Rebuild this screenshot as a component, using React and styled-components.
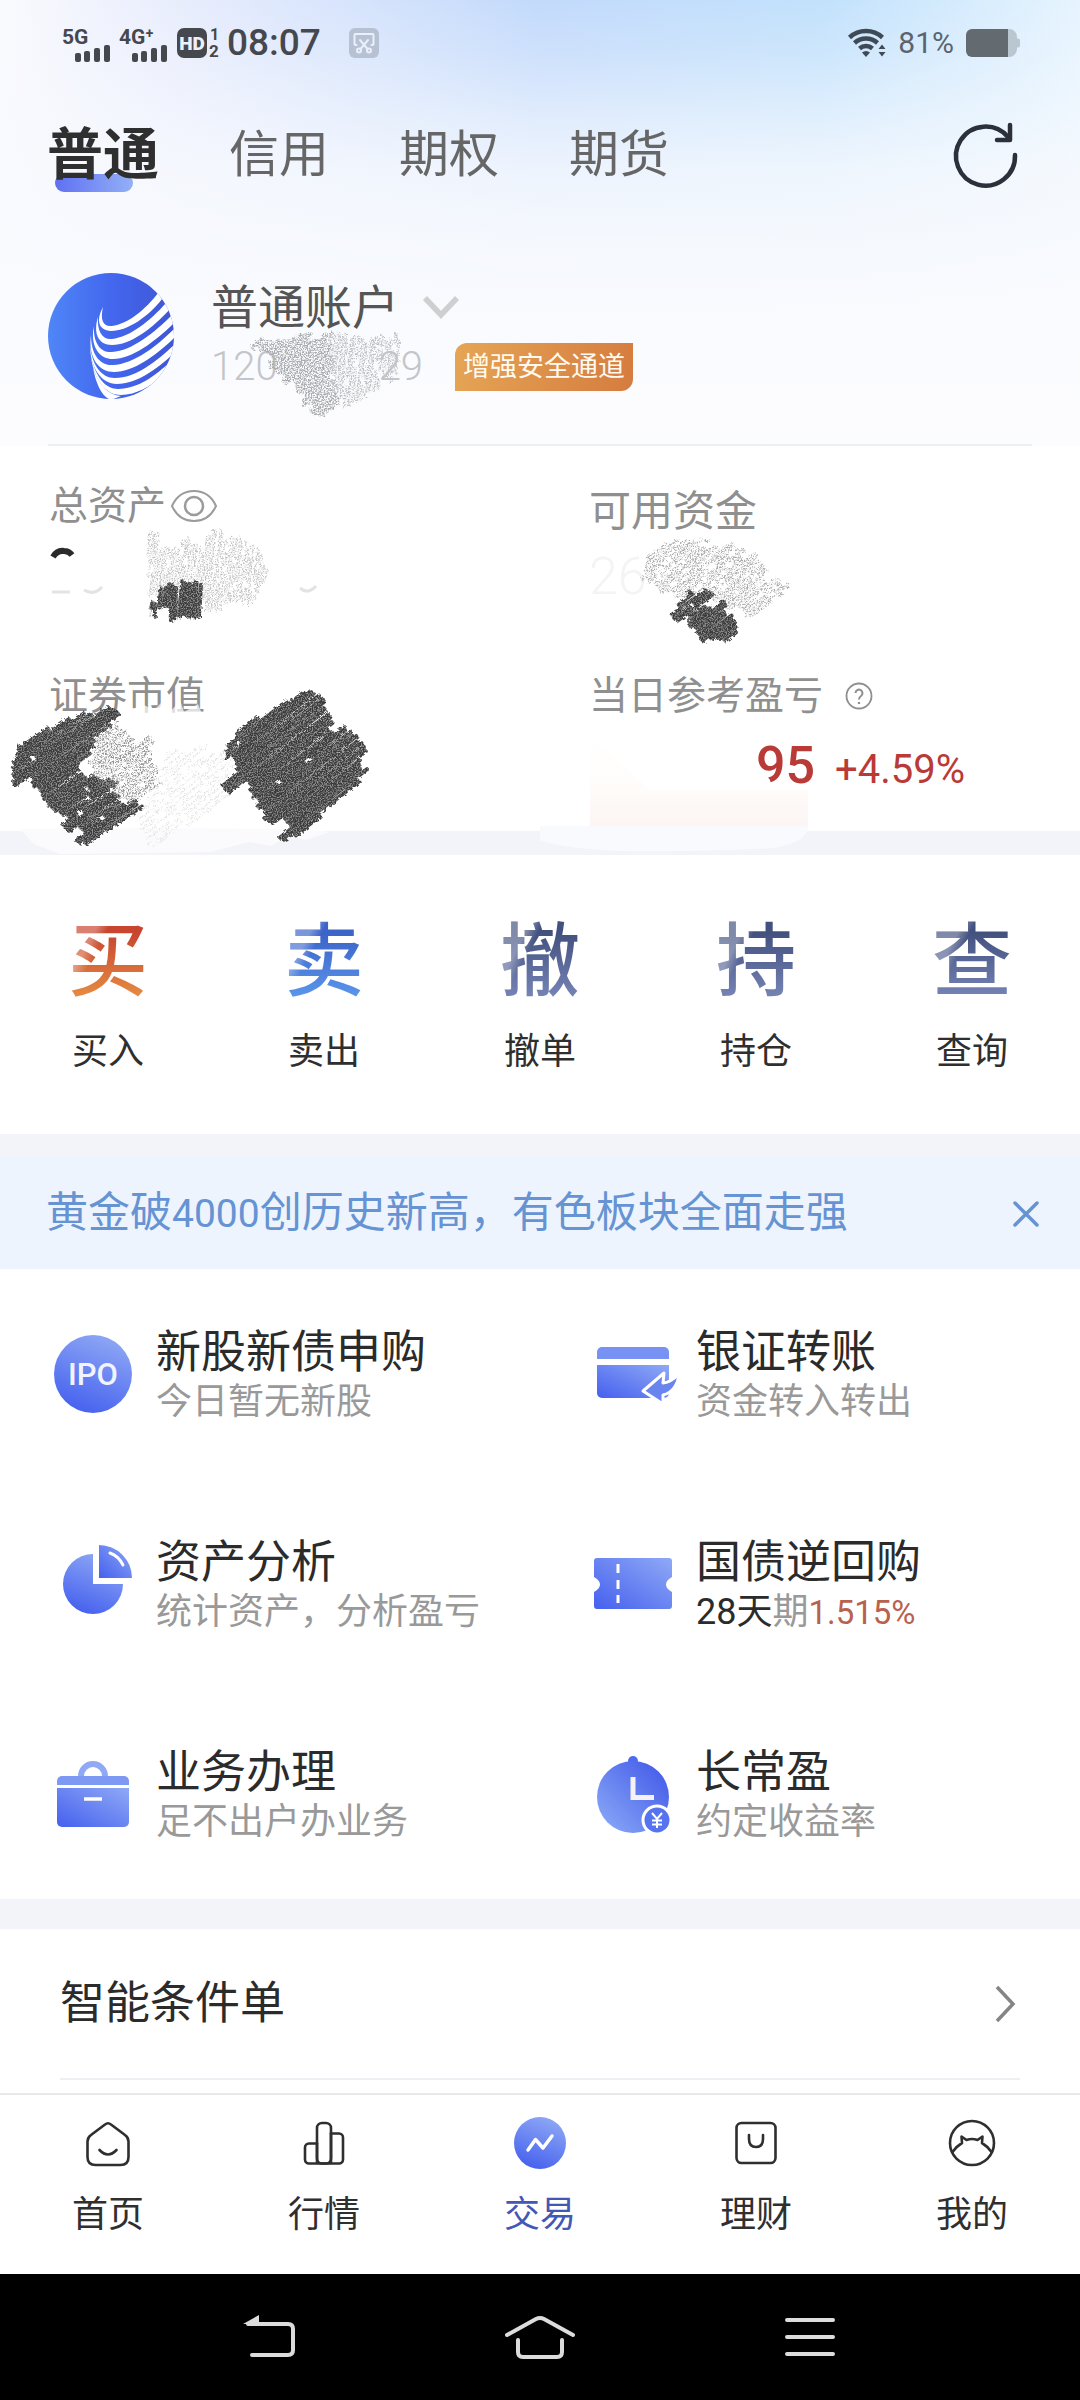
import React, { useState } from "react";
import styled, { createGlobalStyle, css } from "styled-components";

const GlobalStyle = createGlobalStyle`
  *, *::before, *::after { box-sizing: border-box; }
  body {
    margin: 0;
    background: #fff;
    color: #2b2b2b;
    font-family: Roboto, "Noto Sans CJK SC", sans-serif;
  }
  button {
    margin: 0;
    padding: 0;
    border: 0;
    background: none;
    color: inherit;
    font: inherit;
    cursor: pointer;
  }
  a { color: inherit; text-decoration: none; }
  svg { display: block; flex: none; overflow: visible; }
`;

/* ---------- layout ---------- */

const Page = styled.div`
  display: flex;
  flex-direction: column;
  min-height: 100vh;
  background: #fff;
`;

const Header = styled.header`
  background:
    linear-gradient(180deg, rgba(249, 250, 254, 0) 0%, rgba(249, 250, 254, 0.2) 12%, rgba(248, 250, 254, 0.55) 26%, rgba(248, 250, 254, 0.8) 38%, rgba(248, 250, 254, 0.94) 54%, #fafbfe 76%, #fcfcfe 100%),
    linear-gradient(90deg, #fafafe 0%, rgba(240, 241, 253, 0.8) 18%, rgba(226, 234, 252, 0) 50%),
    linear-gradient(90deg, rgba(190, 224, 252, 0) 50%, rgba(194, 227, 252, 0.8) 76%, #e6f4fe 100%),
    #c3dafb;
`;

const Band = styled.div`
  height: ${(p) => p.$size}px;
  background: #f3f4f9;
`;

/* ---------- status bar ---------- */

const StatusBar = styled.div`
  display: flex;
  align-items: center;
  justify-content: space-between;
  height: 86px;
  padding: 0 60px 0 62px;
  color: #45484d;
`;

const StatusGroup = styled.div`
  display: flex;
  align-items: center;
  gap: ${(p) => p.$gap}px;
`;

const Clock = styled.time`
  font-size: 37px;
  line-height: 40px;
  font-weight: 500;
`;

const Capture = styled.span`
  margin-left: 21px;
`;

const BatteryText = styled.span`
  font-size: 30px;
  line-height: 40px;
  color: #5b646d;
`;

/* ---------- account types ---------- */

const Tabs = styled.nav`
  display: flex;
  align-items: center;
  gap: 70px;
  height: 130px;
  padding: 8px 61px 0 47px;
`;

const Tab = styled.button`
  position: relative;
  font-size: 50px;
  line-height: 64px;
  color: #666;
  ${(p) =>
    p.$active &&
    css`
      font-size: 56px;
      font-weight: 700;
      color: #2f2f2f;
      &::before {
        content: "";
        position: absolute;
        left: 8px;
        bottom: -5px;
        width: 78px;
        height: 18px;
        border-radius: 9px;
        background: linear-gradient(90deg, #6070f2, #93b0f6);
      }
    `}
`;

const TabText = styled.span`
  position: relative;
`;

const Refresh = styled.button`
  margin-left: auto;
`;

/* ---------- account ---------- */

const Account = styled.section`
  position: relative;
  display: flex;
  gap: 37px;
  padding: 57px 48px 45px;
`;

const AccountInfo = styled.div`
  display: flex;
  flex-direction: column;
`;

const AccountName = styled.button`
  display: flex;
  align-items: center;
  gap: 24px;
  font-size: 47px;
  line-height: 70px;
  color: #555;
`;

const AccountMeta = styled.div`
  display: flex;
  align-items: center;
  height: 48px;
`;

const AccountNumber = styled.span`
  display: flex;
  justify-content: space-between;
  width: 212px;
  margin-right: 32px;
  font-size: 40px;
  line-height: 48px;
  font-weight: 300;
  color: #c4c5c8;
`;

const SafeBadge = styled.span`
  padding: 0 8px;
  border-radius: 12px 0 12px 0;
  background: linear-gradient(100deg, #e5a555, #d57c3f);
  color: #fffaf0;
  font-size: 27px;
  line-height: 48px;
`;

const Rule = styled.hr`
  height: 2px;
  margin: 0 ${(p) => p.$inset}px;
  border: 0;
  background: #eeeff2;
`;

/* ---------- assets ---------- */

const Assets = styled.section`
  position: relative;
  display: grid;
  grid-template-columns: 1fr 1fr;
  grid-template-rows: 190px 164px;
  padding-top: 31px;
  background: #fff;
`;

const Asset = styled.div`
  padding-left: 49px;
`;

const AssetLabel = styled.div`
  display: flex;
  align-items: center;
  gap: ${(p) => p.$gap || 0}px;
  font-size: ${(p) => (p.$large ? 42 : 39)}px;
  line-height: ${(p) => (p.$large ? 70 : 58)}px;
  color: #8f8f8f;
`;

const AssetValue = styled.div`
  display: flex;
  align-items: baseline;
  gap: 20px;
  padding: 11px 0 0 167px;
  color: #b93a37;
  font-size: 52px;
  line-height: 60px;
  font-weight: 500;
`;

const Rate = styled.span`
  font-size: 40px;
  font-weight: 400;
`;

const FadedValue = styled.div`
  font-size: 52px;
  line-height: 60px;
  font-weight: 300;
  color: #f4f4f4;
`;

const Overlay = styled.svg`
  position: absolute;
  left: 0;
  top: 0;
  pointer-events: none;
`;

/* ---------- trade actions ---------- */

const Actions = styled.nav`
  display: grid;
  grid-template-columns: repeat(5, 1fr);
  padding: 65px 0 60px;
  background: #fff;
`;

const Action = styled.button`
  display: flex;
  flex-direction: column;
  align-items: center;
  gap: 26px;
  font-size: 36px;
  line-height: 44px;
  color: #2f2f2f;
`;

const ActionGlyph = styled.span`
  font-size: 80px;
  line-height: 84px;
  font-weight: 500;
  color: transparent;
  background:
    linear-gradient(118deg, rgba(255, 255, 255, 0.32) 26%, rgba(255, 255, 255, 0) 36%),
    linear-gradient(180deg, ${(p) => p.$from} 15%, ${(p) => p.$to} 90%);
  background-clip: text;
  -webkit-background-clip: text;
`;

/* ---------- notice ---------- */

const Notice = styled.aside`
  display: flex;
  align-items: center;
  justify-content: space-between;
  height: 111px;
  padding: 0 40px 0 46px;
  background: #edf4fd;
  color: #6593d3;
  font-size: 42px;
  line-height: 56px;
`;

const NoticeNumber = styled.span`
  font-size: 39px;
`;

/* ---------- services ---------- */

const Services = styled.section`
  display: grid;
  grid-template-columns: 1fr 1fr;
  grid-auto-rows: 210px;
  background: #fff;
`;

const Service = styled.a`
  display: flex;
  align-items: center;
  gap: 23px;
  padding-left: 53px;
`;

const ServiceText = styled.div`
  padding-top: 6px;
`;

const ServiceTitle = styled.div`
  font-size: 45px;
  line-height: 50px;
  color: #2b2b2b;
`;

const ServiceNote = styled.div`
  font-size: 36px;
  line-height: 48px;
  color: #999;
`;

const Dark = styled.span`
  color: #2b2b2b;
`;

const Yield = styled.span`
  font-size: 33px;
  color: #b9614f;
`;

const MoreRow = styled.a`
  display: flex;
  align-items: center;
  justify-content: space-between;
  height: 149px;
  padding: 0 62px 0 60px;
  background: #fff;
  font-size: 45px;
  line-height: 60px;
`;

/* ---------- bottom bars ---------- */

const TabBar = styled.nav`
  display: grid;
  grid-template-columns: repeat(5, 1fr);
  margin-top: 13px;
  padding: 22px 0 37px;
  border-top: 2px solid #e9e9ea;
  background: #fff;
`;

const TabLink = styled.a`
  display: flex;
  flex-direction: column;
  align-items: center;
  gap: 24px;
  font-size: 36px;
  line-height: 44px;
  color: ${(p) => (p.$active ? "#4357b5" : "#2f2f2f")};
`;

const SystemNav = styled.nav`
  display: grid;
  grid-template-columns: repeat(3, 1fr);
  align-items: center;
  height: 126px;
  margin-top: auto;
  padding: 0 135px;
  background: #000;
`;

const SystemKey = styled.button`
  display: flex;
  justify-content: center;
`;

/* ---------- status icons ---------- */

const Signal = ({ label }) => (
  <svg width="50" height="38" viewBox="0 -4 50 38" fill="#45484d">
    <text x="0" y="16" fontFamily="Roboto" fontSize="21" fontWeight="700">{label}</text>
    <rect x="13" y="25" width="6" height="9" rx="2" />
    <rect x="22" y="23" width="6" height="11" rx="2" />
    <rect x="32" y="20" width="6" height="14" rx="2" />
    <rect x="42" y="17" width="6" height="17" rx="2" />
  </svg>
);

const HdBadge = () => (
  <svg width="44" height="38" viewBox="0 -3 44 38">
    <rect x="1" y="1" width="30" height="30" rx="7" fill="#45484d" />
    <text x="16" y="23" textAnchor="middle" fontFamily="Roboto" fontSize="19" fontWeight="900" fill="#eef1fb">HD</text>
    <text x="34" y="13" fontFamily="Roboto" fontSize="16" fontWeight="700" fill="#45484d">1</text>
    <text x="33" y="30" fontFamily="Roboto" fontSize="17" fontWeight="700" fill="#45484d">2</text>
  </svg>
);

const CaptureIcon = () => (
  <svg width="30" height="30" viewBox="0 0 30 30">
    <rect width="30" height="30" rx="6" fill="#b6c2d3" />
    <g fill="none" stroke="#e9f0fa" strokeWidth="2" strokeLinecap="round">
      <path d="M7.500 17H6.500a1 1 0 0 1-1-1V7a1 1 0 0 1 1-1h17a1 1 0 0 1 1 1v9a1 1 0 0 1-1 1h-1" />
      <path d="M11 12l7.500 9M19 12l-7.500 9" />
      <circle cx="10" cy="22.500" r="2" />
      <circle cx="20" cy="22.500" r="2" />
    </g>
  </svg>
);

const Wifi = () => (
  <svg width="38" height="30" viewBox="0 0 38 30">
    <g fill="none" stroke="#3f4a57" strokeWidth="4.500">
      <path d="M1.500 9.500a24.500 24.500 0 0 1 33 0" />
      <path d="M6.500 15a17 17 0 0 1 23 0" />
      <path d="M11.500 20.500a10 10 0 0 1 13 0" />
    </g>
    <path d="M18 29l-4-4.500a6 6 0 0 1 8 0z" fill="#3f4a57" />
    <path d="M30.500 21l3.500-4.500 3.500 4.500zM30.500 24l3.500 4.500 3.500-4.500z" fill="#3f4a57" />
  </svg>
);

const Battery = () => (
  <svg width="54" height="28" viewBox="0 0 54 28">
    <path d="M42 0h1a8 8 0 0 1 8 8v1.500h1a2 2 0 0 1 2 2v5a2 2 0 0 1-2 2h-1V20a8 8 0 0 1-8 8h-1z" fill="#bac7d1" />
    <path d="M6 0h36v28H6a6 6 0 0 1-6-6V6a6 6 0 0 1 6-6z" fill="#636a70" />
  </svg>
);

/* ---------- page icons ---------- */

const RefreshIcon = () => (
  <svg width="66" height="66" viewBox="0 0 66 66" fill="none" stroke="#2b303a" strokeWidth="4.500" strokeLinecap="round" strokeLinejoin="round">
    <path d="M62 33A29.500 29.500 0 1 1 55 15" />
    <path d="M57 3v15H44" />
  </svg>
);

const Logo = () => (
  <svg width="126" height="126" viewBox="0 0 126 126">
    <defs>
      <linearGradient id="logo" x1="0" y1="0" x2="1" y2="0">
        <stop offset="0" stopColor="#4f86f7" />
        <stop offset="0.5" stopColor="#4367ee" />
        <stop offset="1" stopColor="#3f55d6" />
      </linearGradient>
      <clipPath id="logoClip"><circle cx="63" cy="63" r="63" /></clipPath>
    </defs>
    <circle cx="63" cy="63" r="63" fill="url(#logo)" />
    <g clipPath="url(#logoClip)" fill="#fff">
      <path d="M55 34c-3 13 0 20 9 19 16-2 34-17 46-33l4 6C101 43 80 58 63 58c-13-1-15-11-8-24z" />
      <path d="M50 44c-1 14 4 23 14 22 18-2 38-18 54-36l4 6C104 56 82 72 64 72 50 72 45 60 50 44z" />
      <path d="M46 53c-1 16 6 27 18 26 20-1 43-20 60-37l3 7C108 68 84 86 65 86 49 86 42 70 46 53z" />
      <path d="M43 62c0 18 8 31 22 30 21-1 44-19 62-37v9C110 81 86 99 66 99 49 99 40 82 43 62z" />
      <path d="M42 72c2 20 11 33 25 33 21 0 42-17 60-34l-2 10C108 97 88 111 69 111 53 111 42 94 42 72z" />
      <path d="M43 84c5 20 14 32 27 32 20 0 38-14 52-27l-6 13c-13 11-28 20-43 20-16 0-27-16-30-38z" />
      <path d="M45 95c6 17 15 27 28 28l-10 4c-9-3-15-16-18-32z" />
    </g>
  </svg>
);

const ChevronDown = () => (
  <svg width="36" height="24" viewBox="0 0 36 24" fill="none" stroke="#cfcfd1" strokeWidth="5.500">
    <path d="M2 2l16 17L34 2" />
  </svg>
);

const Eye = () => (
  <svg width="46" height="32" viewBox="0 0 46 32" fill="none" stroke="#9b9b9b" strokeWidth="2">
    <path d="M1 16C6 5 15 1 23 1s17 4 22 15c-5 11-14 15-22 15S6 27 1 16z" />
    <circle cx="23" cy="16" r="9" strokeWidth="2.500" />
  </svg>
);

const Help = () => (
  <svg width="28" height="28" viewBox="0 0 28 28" fill="none" stroke="#8f8f8f">
    <circle cx="14" cy="14" r="12.500" strokeWidth="1.800" />
    <path d="M10.500 11a3.500 3.500 0 1 1 5.500 3c-1.500 1-2 1.700-2 3.500" strokeWidth="2" />
    <path d="M14 20v2" strokeWidth="2.200" />
  </svg>
);

const Close = () => (
  <svg width="28" height="28" viewBox="0 0 28 28" fill="none" stroke="#6593d3" strokeWidth="3.500" strokeLinecap="round">
    <path d="M3 3l22 22M25 3L3 25" />
  </svg>
);

const ChevronRight = () => (
  <svg width="22" height="38" viewBox="0 0 22 38" fill="none" stroke="#858585" strokeWidth="3.500">
    <path d="M1 2l16 17L1 36" />
  </svg>
);

const GradientSource = styled.svg`
  position: absolute;
`;

const IconGradients = () => (
  <GradientSource width="0" height="0" viewBox="0 0 1 1" aria-hidden="true">
    <defs>
      <linearGradient id="blueUp" x1="0.300" y1="1" x2="0.700" y2="0">
        <stop offset="0" stopColor="#4560ee" />
        <stop offset="1" stopColor="#8ea8f5" />
      </linearGradient>
      <linearGradient id="blueSide" x1="0" y1="1" x2="1" y2="0">
        <stop offset="0" stopColor="#4560ee" />
        <stop offset="1" stopColor="#8fa9f6" />
      </linearGradient>
      <linearGradient id="blueDown" x1="0.150" y1="0.900" x2="0.900" y2="0.200">
        <stop offset="0" stopColor="#83a2f6" />
        <stop offset="1" stopColor="#4a62ea" />
      </linearGradient>
    </defs>
  </GradientSource>
);

const ServiceSvg = styled.svg`
  width: 80px;
  height: 80px;
`;

const serviceIcons = {
  ipo: (
    <>
      <circle cx="40" cy="40" r="39" fill="url(#blueUp)" />
      <text x="40" y="51" textAnchor="middle" fontFamily="Roboto" fontSize="31" fontWeight="500" fill="#f1f4ff">IPO</text>
    </>
  ),
  transfer: (
    <>
      <path d="M4 25v-7a5 5 0 0 1 5-5h62a5 5 0 0 1 5 5v7z" fill="#7792f2" />
      <path d="M4 31h72v28a5 5 0 0 1-5 5H9a5 5 0 0 1-5-5z" fill="url(#blueSide)" />
      <path d="M50 57l21-18-1 10c6 0 11-4 16-9-1 11-7 19-16 21v9z" fill="#6884ef" stroke="#fff" strokeWidth="3" strokeLinejoin="round" />
    </>
  ),
  analysis: (
    <>
      <path d="M40 10v30h30a30 30 0 1 1-30-30z" fill="url(#blueUp)" />
      <path d="M46 1a33 33 0 0 1 33 33H46z" fill="url(#blueSide)" />
      <path d="M57 9c6 2 10 6 13 12" fill="none" stroke="#fff" strokeWidth="3" strokeLinecap="round" />
    </>
  ),
  repo: (
    <>
      <path d="M4 14h72a3 3 0 0 1 3 3v16c-8 4-8 11 0 15v14a3 3 0 0 1-3 3H4a3 3 0 0 1-3-3V48c8-4 8-11 0-15V17a3 3 0 0 1 3-3z" fill="url(#blueSide)" />
      <path d="M25 20v9M25 36v9M25 51v8" stroke="#fff" strokeWidth="3" />
    </>
  ),
  business: (
    <>
      <path d="M28 24v-2a12 12 0 0 1 24 0v2" fill="none" stroke="#8fa9f5" strokeWidth="6" />
      <path d="M4 31v-4a5 5 0 0 1 5-5h62a5 5 0 0 1 5 5v4z" fill="#7e99f3" />
      <path d="M4 34h72v34a5 5 0 0 1-5 5H9a5 5 0 0 1-5-5z" fill="url(#blueSide)" />
      <path d="M31 45h18" stroke="#fff" strokeWidth="3.500" />
    </>
  ),
  longterm: (
    <>
      <circle cx="40" cy="7" r="5" fill="#4f6bef" />
      <circle cx="40" cy="43" r="36" fill="url(#blueDown)" />
      <path d="M40 23v20.500h21" fill="none" stroke="#f4f2f8" strokeWidth="5" />
      <circle cx="64" cy="66" r="14" fill="#5673f0" stroke="#fff" strokeWidth="3" />
      <path d="M59 59l5 6 5-6M64 65v9M59 66.500h10M59 70.500h10" fill="none" stroke="#fff" strokeWidth="2" />
    </>
  ),
};

const TabSvg = styled.svg`
  width: 52px;
  height: 52px;
  fill: none;
  stroke: #2f2f2f;
  stroke-width: 2.6px;
  stroke-linecap: round;
  stroke-linejoin: round;
`;

const tabIcons = {
  home: (
    <>
      <path d="M23 7.500L9 18q-3.500 2.500-3.500 6.500V40q0 8 8 8h25q8 0 8-8V24.500q0-4-3.500-6.500L29 7.500q-3-2.500-6 0z" />
      <path d="M17.500 33q8.500 9 17 0" />
    </>
  ),
  market: (
    <>
      <rect x="19" y="6" width="14" height="40.500" rx="5" />
      <path d="M19 26.500h-8a4 4 0 0 0-4 4v12a4 4 0 0 0 4 4h30a4 4 0 0 0 4-4v-22a4 4 0 0 0-4-4h-8" />
      <path d="M19 26v20M33 16v30" />
    </>
  ),
  trade: (
    <>
      <circle cx="26" cy="26" r="26" fill="url(#blueUp)" stroke="none" />
      <path d="M14 33l7.500-10.500L29 31l9-12" stroke="#fff" strokeWidth="3.500" />
    </>
  ),
  wealth: (
    <>
      <rect x="6.500" y="6" width="39" height="40" rx="5" />
      <path d="M19 18v4q0 8 7 8t7-8v-4" />
    </>
  ),
  mine: (
    <>
      <circle cx="26" cy="26" r="22" />
      <path d="M6.500 35c3-4 6-7 9.500-9l-.500-6.500 5 3.500q5.500-2 11 0l5-3.500-.500 6.500c3.500 2 6.500 5 9.500 9" />
    </>
  ),
};

/* ---------- pencil scribbles ---------- */

function makeRandom(seed) {
  let s = seed * 7919;
  return () => {
    s = (s * 16807) % 2147483647;
    return s / 2147483647;
  };
}

/*
 * Fills a polygon with parallel pencil strokes at the given angle.
 * Strokes are grouped, so that the ends of a group stick out together,
 * and each may be broken by short gaps.
 */
function hatch({ points, angle, step, seed, jitter, breaks = 0 }) {
  const rnd = makeRandom(seed);
  const a = (angle * Math.PI) / 180;
  const cos = Math.cos(a);
  const sin = Math.sin(a);
  const local = points.map(([x, y]) => [x * cos + y * sin, -x * sin + y * cos]);
  const vs = local.map((p) => p[1]);
  const at = (u, v) => `${(u * cos - v * sin).toFixed(1)} ${(u * sin + v * cos).toFixed(1)}`;
  let d = "";
  let left = 0;
  let right = 0;
  let run = 0;
  for (let v = Math.min(...vs) + 1; v < Math.max(...vs); v += step) {
    if (run <= 0) {
      left = (rnd() - 0.5) * jitter;
      right = (rnd() - 0.5) * jitter;
      run = 2 + Math.floor(rnd() * 3);
    }
    run -= 1;
    const hits = [];
    local.forEach((p, i) => {
      const q = local[(i + 1) % local.length];
      if (p[1] > v !== q[1] > v) {
        hits.push(p[0] + ((v - p[1]) / (q[1] - p[1])) * (q[0] - p[0]));
      }
    });
    hits.sort((m, n) => m - n);
    for (let i = 0; i + 1 < hits.length; i += 2) {
      let u = hits[i] + left + (rnd() - 0.5) * 4;
      const end = hits[i + 1] + right + (rnd() - 0.5) * 4;
      while (u < end) {
        const next = rnd() < breaks ? Math.min(end, u + 8 + rnd() * 30) : end;
        d += `M${at(u, v)}L${at(next, v + (rnd() - 0.5) * 2)}`;
        u = next + 5 + rnd() * 6;
      }
    }
  }
  return d;
}

const Hatch = ({ color, width, filter, ...shape }) => (
  <path d={hatch(shape)} stroke={color} strokeWidth={width} strokeLinecap="round" fill="none" filter={`url(#${filter})`} />
);

const PencilFilters = () => (
  <defs>
    <filter id="pencilDark" x="-10%" y="-10%" width="120%" height="120%" colorInterpolationFilters="sRGB">
      <feTurbulence type="fractalNoise" baseFrequency="0.3" numOctaves="2" seed="4" result="warp" />
      <feDisplacementMap in="SourceGraphic" in2="warp" scale="5" result="rough" />
      <feTurbulence type="fractalNoise" baseFrequency="0.8" numOctaves="2" seed="9" />
      <feColorMatrix values="0 0 0 0 0.56  0 0 0 0 0.56  0 0 0 0 0.56  4 0 0 0 -1.7" />
      <feComposite in2="rough" operator="in" result="grain" />
      <feMerge>
        <feMergeNode in="rough" />
        <feMergeNode in="grain" />
      </feMerge>
    </filter>
    <filter id="pencilLight" x="-10%" y="-10%" width="120%" height="120%" colorInterpolationFilters="sRGB">
      <feTurbulence type="fractalNoise" baseFrequency="0.3" numOctaves="2" seed="7" result="warp" />
      <feDisplacementMap in="SourceGraphic" in2="warp" scale="5" result="rough" />
      <feTurbulence type="fractalNoise" baseFrequency="0.7" numOctaves="2" seed="2" />
      <feColorMatrix values="0 0 0 0 0  0 0 0 0 0  0 0 0 0 0  4 0 0 0 -1.5" result="holes" />
      <feComposite in="rough" in2="holes" operator="in" />
    </filter>
  </defs>
);

const AccountScribble = () => (
  <Overlay width="440" height="228" viewBox="0 216 440 228" aria-hidden="true">
    <Hatch points={[[250, 342], [328, 337], [330, 380], [338, 410], [320, 412], [295, 390], [282, 370], [264, 355]]} angle={-42} step={2} seed={11} jitter={12} color="#a9abae" width={3} breaks={0.1} filter="pencilLight" />
    <Hatch points={[[330, 338], [392, 336], [402, 350], [394, 376], [344, 406], [332, 390]]} angle={-84} step={4} seed={12} jitter={10} color="#bfc1c4" width={3} breaks={0.5} filter="pencilLight" />
  </Overlay>
);

const dark = { color: "#3a3a3a", filter: "pencilDark", width: 4, step: 4, jitter: 26, breaks: 0.1 };
const light = { color: "#a8a8a8", filter: "pencilLight", width: 2, step: 3, jitter: 20, breaks: 0.6 };

const AssetScribbles = () => (
  <Overlay width="1080" height="409" viewBox="0 446 1080 409" aria-hidden="true">
    <PencilFilters />
    {/* washed-out edges running into the divider band */}
    <path d="M20 829L150 828 300 829 330 832 306 840 290 836 270 846 250 842 210 852 60 854 34 844z" fill="#fbfbfe" />
    <path d="M540 826H808q0 16-34 22-80 4-150 3-60-2-84-11z" fill="#f9fafd" />
    <linearGradient id="blush" x1="0" y1="0" x2="0" y2="1">
      <stop offset="0" stopColor="#fff" />
      <stop offset="0.500" stopColor="#fffdfb" />
      <stop offset="1" stopColor="#fcf5f4" />
    </linearGradient>
    <path d="M590 735L650 790H808V826H590z" fill="url(#blush)" />

    {/* total assets */}
    <path d="M53 557q4-7 11-6 5 0 8 4" fill="none" stroke="#2b2b2b" strokeWidth="6" />
    <path d="M52 592h18M84 590q10 6 18-3M300 588q8 7 16-2" fill="none" stroke="#e3e3e3" strokeWidth="3" />
    <Hatch {...light} points={[[148, 542], [238, 536], [267, 560], [270, 580], [250, 608], [151, 610]]} angle={-84} seed={3} color="#c4c4c4" />
    <Hatch {...dark} points={[[151, 600], [178, 588], [202, 588], [203, 612], [154, 614]]} angle={-86} seed={5} jitter={20} />

    {/* available funds */}
    <Hatch {...light} points={[[667, 545], [733, 545], [758, 567], [782, 593], [750, 620], [733, 608], [705, 593], [678, 595], [652, 595], [644, 577], [650, 555]]} angle={-36} seed={6} color="#acacac" />
    <Hatch {...dark} points={[[692, 589], [712, 604], [734, 617], [743, 630], [722, 643], [709, 643], [702, 628], [687, 626], [674, 610]]} angle={-36} seed={8} jitter={16} />

    {/* securities value */}
    <path d="M122 716l20-12 12 6 8-8 10 8 8-10 4 12 14-8 4 10 2 12H124z" fill="#fff" opacity="0.7" />
    <Hatch {...light} points={[[165, 747], [207, 746], [230, 762], [236, 793], [160, 843], [140, 812]]} angle={-38} seed={14} color="#e4e4e4" step={5} />
    <Hatch {...dark} points={[[93, 706], [108, 708], [120, 717], [92, 740], [84, 763], [110, 790], [122, 800], [134, 812], [96, 840], [80, 846], [57, 820], [28, 790], [20, 771], [27, 743], [52, 725]]} angle={-34} seed={17} />
    <Hatch {...light} points={[[120, 719], [139, 737], [160, 760], [160, 785], [127, 806], [106, 783], [88, 760], [94, 737]]} angle={-34} seed={19} color="#929292" breaks={0.3} />
    <Hatch {...dark} points={[[293, 698], [306, 700], [320, 709], [339, 724], [356, 740], [363, 757], [363, 776], [312, 826], [288, 838], [265, 814], [230, 777], [227, 750], [242, 729]]} angle={-38} seed={23} />

    {/* stroke across the daily profit figure */}
    <path d="M748 758l10 6 12 16 2 8h-24z" fill="#fff" />
  </Overlay>
);

/* ---------- data ---------- */

const accountTabs = ["普通", "信用", "期权", "期货"];

const actions = [
  { glyph: "买", label: "买入", from: "#c8452f", to: "#e58a42" },
  { glyph: "卖", label: "卖出", from: "#3c63c8", to: "#5a94ea" },
  { glyph: "撤", label: "撤单", from: "#43517f", to: "#7483b4" },
  { glyph: "持", label: "持仓", from: "#43517f", to: "#7483b4" },
  { glyph: "查", label: "查询", from: "#43517f", to: "#7483b4" },
];

const services = [
  { icon: "ipo", title: "新股新债申购", note: "今日暂无新股" },
  { icon: "transfer", title: "银证转账", note: "资金转入转出" },
  { icon: "analysis", title: "资产分析", note: "统计资产，分析盈亏" },
  { icon: "repo", title: "国债逆回购", note: <><Dark>28天</Dark>期<Yield>1.515%</Yield></> },
  { icon: "business", title: "业务办理", note: "足不出户办业务" },
  { icon: "longterm", title: "长常盈", note: "约定收益率" },
];

const bottomTabs = [
  { icon: "home", label: "首页" },
  { icon: "market", label: "行情" },
  { icon: "trade", label: "交易", active: true },
  { icon: "wealth", label: "理财" },
  { icon: "mine", label: "我的" },
];

export default function App() {
  const [tab, setTab] = useState("普通");

  return (
    <Page>
      <GlobalStyle />
      <IconGradients />
      <Header>
        <StatusBar>
          <StatusGroup $gap={7}>
            <Signal label="5G" />
            <Signal label="4G⁺" />
            <HdBadge />
            <Clock>08:07</Clock>
            <Capture><CaptureIcon /></Capture>
          </StatusGroup>
          <StatusGroup $gap={12}>
            <Wifi />
            <BatteryText>81%</BatteryText>
            <Battery />
          </StatusGroup>
        </StatusBar>

        <Tabs>
          {accountTabs.map((name) => (
            <Tab key={name} $active={name === tab} onClick={() => setTab(name)}>
              <TabText>{name}</TabText>
            </Tab>
          ))}
          <Refresh aria-label="刷新"><RefreshIcon /></Refresh>
        </Tabs>

        <Account>
          <Logo />
          <AccountInfo>
            <AccountName>普通账户<ChevronDown /></AccountName>
            <AccountMeta>
              <AccountNumber><span>120</span><span>29</span></AccountNumber>
              <SafeBadge>增强安全通道</SafeBadge>
            </AccountMeta>
          </AccountInfo>
          <AccountScribble />
        </Account>
        <Rule $inset={48} />
      </Header>

      <Assets>
        <Asset>
          <AssetLabel $gap={5}>总资产<Eye /></AssetLabel>
        </Asset>
        <Asset>
          <AssetLabel $large>可用资金</AssetLabel>
          <FadedValue>26</FadedValue>
        </Asset>
        <Asset>
          <AssetLabel>证券市值</AssetLabel>
        </Asset>
        <Asset>
          <AssetLabel $gap={22}>当日参考盈亏<Help /></AssetLabel>
          <AssetValue>95<Rate>+4.59%</Rate></AssetValue>
        </Asset>
        <AssetScribbles />
      </Assets>
      <Band $size={24} />

      <Actions>
        {actions.map((a) => (
          <Action key={a.label}>
            <ActionGlyph $from={a.from} $to={a.to}>{a.glyph}</ActionGlyph>
            {a.label}
          </Action>
        ))}
      </Actions>
      <Band $size={24} />

      <Notice>
        <span>黄金破<NoticeNumber>4000</NoticeNumber>创历史新高，有色板块全面走强</span>
        <button aria-label="关闭"><Close /></button>
      </Notice>

      <Services>
        {services.map((s) => (
          <Service key={s.title} href="#">
            <ServiceSvg viewBox="0 0 80 80" aria-hidden="true">{serviceIcons[s.icon]}</ServiceSvg>
            <ServiceText>
              <ServiceTitle>{s.title}</ServiceTitle>
              <ServiceNote>{s.note}</ServiceNote>
            </ServiceText>
          </Service>
        ))}
      </Services>
      <Band $size={30} />

      <MoreRow href="#">
        智能条件单
        <ChevronRight />
      </MoreRow>
      <Rule $inset={60} />

      <TabBar>
        {bottomTabs.map((t) => (
          <TabLink key={t.label} href="#" $active={t.active}>
            <TabSvg viewBox="0 0 52 52" aria-hidden="true">{tabIcons[t.icon]}</TabSvg>
            {t.label}
          </TabLink>
        ))}
      </TabBar>

      <SystemNav>
        <SystemKey aria-label="返回">
          <svg width="52" height="44" viewBox="0 0 52 44" fill="none" stroke="#dcdcdc" strokeWidth="4" strokeLinejoin="round" strokeLinecap="round">
            <path d="M4 9h40q5 0 5 5v21q0 5-5 5H8" />
            <path d="M-1 9l16-9v9z" fill="#dcdcdc" stroke="none" />
          </svg>
        </SystemKey>
        <SystemKey aria-label="主页">
          <svg width="72" height="44" viewBox="0 0 72 44" fill="none" stroke="#dcdcdc" strokeWidth="4" strokeLinejoin="round" strokeLinecap="round">
            <path d="M3 20L32 4q4-2 8 0l29 16" />
            <path d="M14 25v12q0 5 5 5h34q5 0 5-5V25" />
          </svg>
        </SystemKey>
        <SystemKey aria-label="菜单">
          <svg width="52" height="44" viewBox="0 0 52 44" stroke="#dcdcdc" strokeWidth="4" strokeLinecap="round">
            <path d="M3 5h46M3 22h46M3 39h46" />
          </svg>
        </SystemKey>
      </SystemNav>
    </Page>
  );
}
